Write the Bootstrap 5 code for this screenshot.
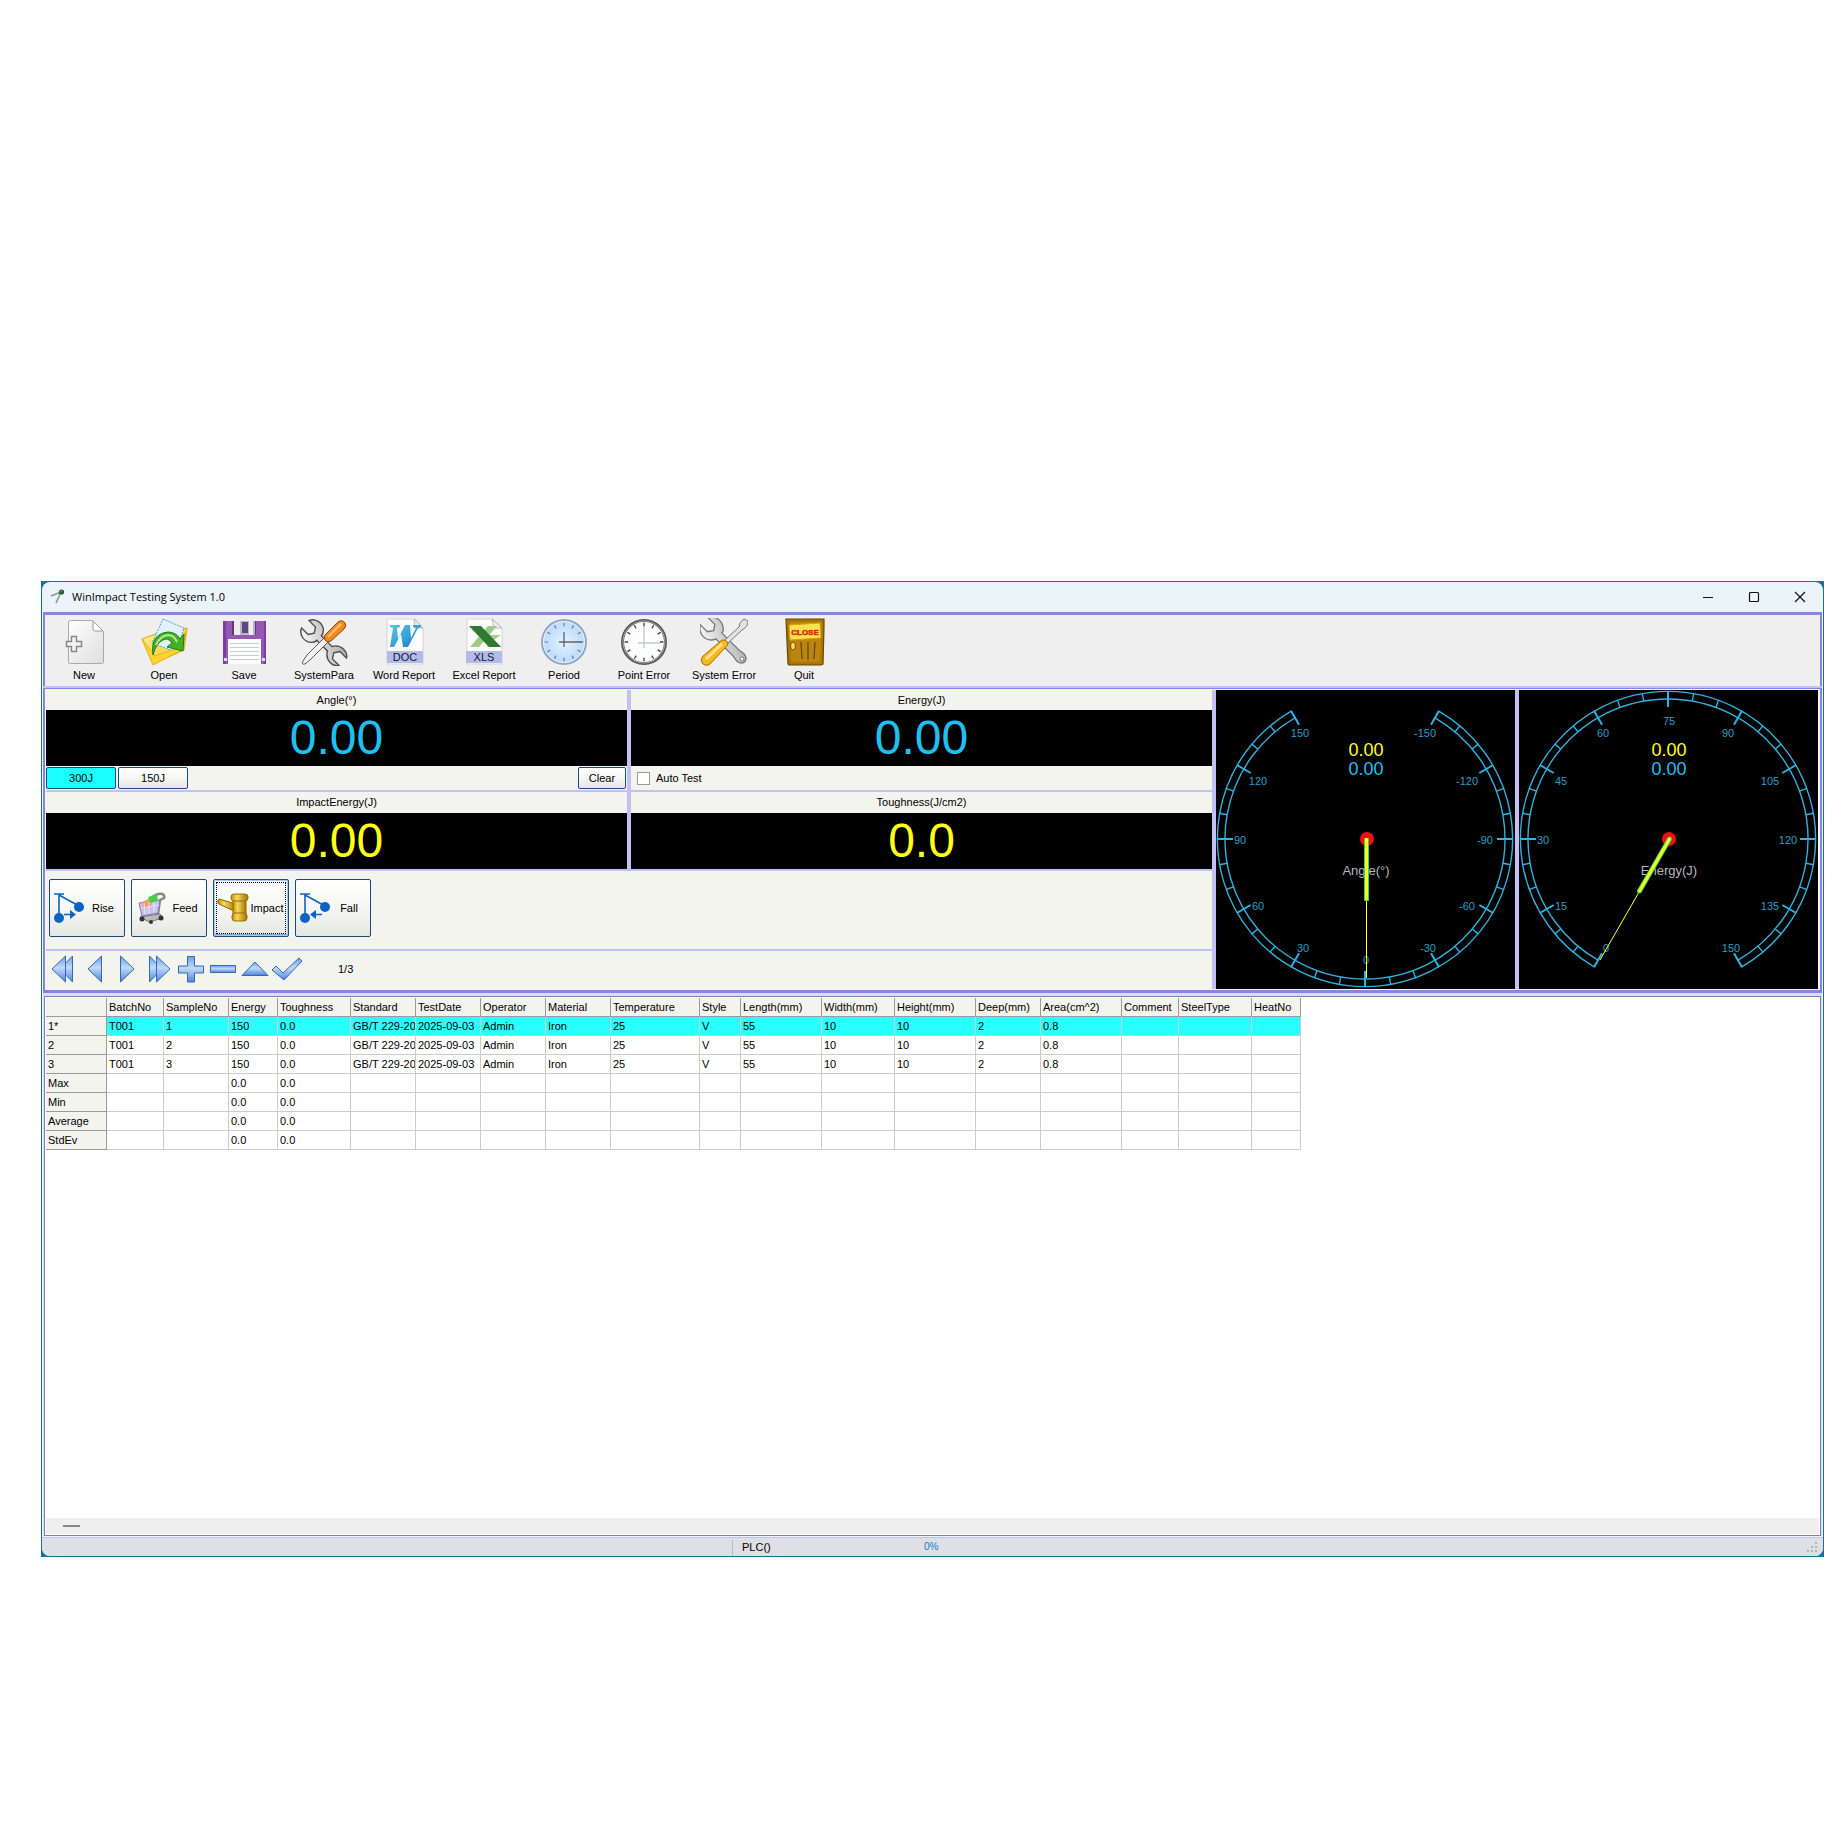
<!DOCTYPE html>
<html lang="en">
<head>
<meta charset="utf-8">
<meta name="viewport" content="width=device-width, initial-scale=1">
<title>WinImpact Testing System 1.0</title>
<link href="https://cdn.jsdelivr.net/npm/bootstrap@5.3.0/dist/css/bootstrap.min.css" rel="stylesheet">
<style>
:root{--panel:#f4f4ef;--lav:#c3c1f4;--purple:#8583ee;--cyan:#1fc0f0}
body{font:11px/16px "Liberation Sans",Arial,sans-serif;color:#000;background:#fff;padding:581px 17px 0 41px}
button{font:inherit;color:inherit;padding:0;border:0;background:none;line-height:16px}
svg{display:block;flex:none}
.win-frame{background:#1c6f9a;padding:1px}
.win{background:#ebf4f8;border-radius:8px;overflow:hidden}
.titlebar{height:30px;padding-left:7px;border-radius:8px 8px 0 0}
.titlebar h1{font:11px/16px "Open Sans","Noto Sans",sans-serif;margin:0 0 0 5px}
.win-ctl{width:46px;height:28px}
.main{padding:0 1px}
.tools{height:76px;background:#efefef;border-top:3px solid var(--purple);border-bottom:2px solid var(--lav);box-shadow:inset 2px 0 var(--purple),inset -2px 0 var(--purple);padding:1px 0 0 1px}
.tool{width:80px;height:68px;text-align:center}
.tool svg{margin:0 auto 1px}
.deck{border:2px solid var(--purple);border-top-width:1px;border-bottom-width:3px;background:var(--panel);padding:1px 2px 1px 1px}
.readouts{display:grid;grid-template-columns:1fr 1fr;column-gap:4px;background:var(--lav)}
.readout{background:var(--panel)}
.readout h2{font-size:11px;line-height:20px;margin:0;font-weight:400;text-align:center}
.readout output{display:block;background:#000;color:var(--cyan);font-size:48px;line-height:56px;text-align:center}
.readout.result{border-top:2px solid var(--lav)}
.readout.result h2{line-height:21px}
.readout.result output{color:#ffff1c}
.optbar{height:24px;padding:1px 1px 1px 0;gap:2px}
.xpbtn{border:1px solid #174a78;border-radius:2px;background:linear-gradient(#fff,#f6f6f4 50%,#e6e6e1)}
.optbar .xpbtn{width:70px;height:22px}
.optbar .xpbtn.clear{width:48px}
.xpbtn.active{background:#1cfdff}
.chk{width:13px;height:13px;margin:0 0 0 6px;border:1px solid #999;background:#fff;appearance:none}
.chk:checked{background:#1c6fc0}
.actions{height:80px;padding:8px 0 0 3px;gap:6px;border-top:2px solid var(--lav)}
.action{width:76px;height:58px;display:flex;align-items:center}
.action svg{margin-left:3px}
.action span{flex:1;text-align:center;padding-right:3px}
.action.focused{border-color:#1a4d80;box-shadow:inset 0 0 0 1px #a9c9ee,inset 0 -2px #7da7d8;outline:1px dotted #000;outline-offset:-4px}
.recnav{height:40px;border-top:2px solid var(--lav);padding:0 0 3px 1px}
.recnav button{width:32px;height:34px;display:flex;align-items:center;justify-content:center}
.recnav output{margin-left:35px;width:44px}
.dial{width:303px;border-left:4px solid var(--lav);background:#000}
.dial text{font-family:"Liberation Sans",Arial,sans-serif;text-anchor:middle;dominant-baseline:central}
.sheet{border:1px solid #7f7cc4;margin-top:2px;background:#fff;padding:1px}
.sheet-wrap{padding:1px 1px 0 1px;background:#dcdcfa}
.sheet-body{min-height:520px;overflow:hidden}
.datagrid{border-collapse:separate;border-spacing:0;table-layout:fixed;width:1255px;margin:0}
.datagrid th,.datagrid td{height:19px;padding:0 0 0 2px;font-weight:400;line-height:18px;border-right:1px solid #ccc;border-bottom:1px solid #ccc;white-space:nowrap;overflow:hidden}
.datagrid th{background:var(--panel);border-color:#9b9b9b}
.datagrid thead th{height:19px}
.datagrid tr.current td{background:#2bffff}
.hscroll{height:16px;background:#efefef;padding:7px 0 0 17px}
.hthumb{width:17px;height:2px;background:#888}
.status{height:19px;border-top:1px solid var(--lav);background:#dfe0e5;line-height:18px;margin-top:1px}
.status .cell1{flex:0 0 691px;border-right:1px solid #bbb;margin:2px 0 1px}
.status .cell2{width:191px;padding-left:9px}
.status .cell3{color:#0c7ec2;font-size:10px}
</style>
</head>
<body>
<svg width="0" height="0" class="position-absolute" aria-hidden="true">
<defs>
<linearGradient id="navg" x1="0" y1="0" x2="0" y2="1"><stop offset="0" stop-color="#6a9fe6"/><stop offset=".45" stop-color="#c0dafa"/><stop offset="1" stop-color="#4d86da"/></linearGradient>
<linearGradient id="pageg" x1="0" y1="0" x2="1" y2="1"><stop offset="0" stop-color="#fff"/><stop offset="1" stop-color="#dedede"/></linearGradient>
<linearGradient id="steel" x1="0" y1="0" x2="1" y2="1"><stop offset="0" stop-color="#fafafa"/><stop offset="1" stop-color="#a8a8a8"/></linearGradient>
<linearGradient id="gold" x1="0" y1="0" x2="1" y2="0"><stop offset="0" stop-color="#c58c06"/><stop offset=".35" stop-color="#f6d95a"/><stop offset="1" stop-color="#a87200"/></linearGradient>
<linearGradient id="yel" x1="0" y1="0" x2="1" y2="1"><stop offset="0" stop-color="#fff3a0"/><stop offset="1" stop-color="#f5bd12"/></linearGradient>
<linearGradient id="bluew" x1="0" y1="0" x2="1" y2="1"><stop offset="0" stop-color="#5cc3ee"/><stop offset="1" stop-color="#1280c4"/></linearGradient>
<radialGradient id="clockb"><stop offset="0" stop-color="#e6f2ff"/><stop offset="1" stop-color="#b9d9fa"/></radialGradient>
<g id="ticks"><path d="M0-22v4M11-19l-2 3.500M19-11l-3.500 2M22 0h-4M19 11l-3.500-2M11 19l-2-3.500M0 22v-4M-11 19l2-3.500M-19 11l3.500-2M-22 0h4M-19-11l3.500 2M-11-19l2 3.500"/></g>
<path id="major" d="M0 132V148" stroke="#2ab6e6" stroke-width="2"/>
<path id="minor" d="M0 140V148" stroke="#2ab6e6" stroke-width="1.400"/>
<g id="seg"><use href="#minor" transform="rotate(10)"/><use href="#minor" transform="rotate(20)"/><use href="#major" transform="rotate(30)"/></g>
<g id="scale" fill="none" stroke="#35afd8" stroke-width="1.400">
<path d="M-73.800-127.800A147.600 147.600 0 1 0 73.800-127.800"/><path d="M-70-121.200A140 140 0 1 0 70-121.200"/>
<use href="#major" transform="rotate(-150)"/>
<use href="#seg" transform="rotate(-150)"/><use href="#seg" transform="rotate(-120)"/><use href="#seg" transform="rotate(-90)"/><use href="#seg" transform="rotate(-60)"/><use href="#seg" transform="rotate(-30)"/><use href="#seg"/><use href="#seg" transform="rotate(30)"/><use href="#seg" transform="rotate(60)"/><use href="#seg" transform="rotate(90)"/><use href="#seg" transform="rotate(120)"/>
</g>
<path id="wrench" d="M-5-23a9 9 0 0 0-4 14q3 3 6 3v13q-6 3-6 9 0 5 4 7v-8l5-3 5 3v8q4-2 4-7 0-6-6-9V-6q3 0 6-3A9 9 0 0 0 5-23v8l-5 3-5-3z"/>
<path id="spanner" d="M-5-23a9 9 0 0 0-4 14q3 3 5 3v21q-2 5 1 8 3 2 6 0 3-3 1-8V-6q3 0 5-3A9 9 0 0 0 5-23v8l-5 3-5-3z"/>
</defs>
</svg>

<div class="win-frame">
<div class="win">
  <header class="titlebar d-flex align-items-center">
    <svg width="18" height="18" viewBox="0 0 18 18"><path d="M12 4L7 15M12 4L2 8" stroke="#8c979c" stroke-width="1.600" fill="none"/><circle cx="12.500" cy="4" r="2.600" fill="#225c33"/><circle cx="12" cy="3.500" r="1" fill="#4d9d5c"/></svg>
    <h1 class="flex-grow-1">WinImpact Testing System 1.0</h1>
    <button class="win-ctl" aria-label="Minimize"><svg class="m-auto" width="12" height="12" viewBox="0 0 12 12"><path d="M1 6.500h10" stroke="#111"/></svg></button>
    <button class="win-ctl" aria-label="Maximize"><svg class="m-auto" width="12" height="12" viewBox="0 0 12 12"><rect x="1.500" y="1.500" width="9" height="9" rx="1" fill="none" stroke="#111" stroke-width="1.200"/></svg></button>
    <button class="win-ctl" aria-label="Close"><svg class="m-auto" width="12" height="12" viewBox="0 0 12 12"><path d="M1 1l10 10M11 1L1 11" stroke="#111" stroke-width="1.200"/></svg></button>
  </header>

  <div class="main">
  <nav class="tools d-flex" aria-label="Main toolbar">
    <button class="tool"><svg width="48" height="48" viewBox="0 0 48 48"><path d="M8.500 4.500q0-2 2-2h22l11 11v31q0 1-2 1h-31q-2 0-2-1z" fill="url(#pageg)" stroke="#a9a9a9"/><path d="M33 3v8q0 2 2 2h8z" fill="#fff" stroke="#999"/><path d="M11.500 18.500h5v5h5v5h-5v5h-5v-5h-5v-5h5z" fill="#f3f3f3" stroke="#888" stroke-width="1.500"/></svg>New</button>
    <button class="tool"><svg width="48" height="48" viewBox="0 0 48 48"><path d="M2 21l16-6 29-5-3 22-31 14z" fill="url(#yel)" stroke="#e5a50a"/><path d="M23 1l21 9-8 24-24-9z" fill="#dff2fb" stroke="#4aa8d8" stroke-dasharray="2 1"/><path d="M2 21l11 26 29-15 5-21-9 19-23 8z" fill="#ffd42e" stroke="#e9b312"/><path d="M13 37q-3-21 15-23 8 0 12 7l4-5-1 17-16-4 5-4q-4-6-9-3-7 3-10 15z" fill="#43b02a" stroke="#1e7a14"/><path d="M16 27q4-9 12-10 6 0 9 7" fill="none" stroke="#b6ec8c" stroke-width="2"/></svg>Open</button>
    <button class="tool"><svg width="48" height="48" viewBox="0 0 48 48"><path d="M3 3h43v43H6l-3-3z" fill="#9559b4"/><path d="M3 3h3v43H3zM44 3h2v43h-2z" fill="#7c3e9d"/><path d="M12 3h24v14H12z" fill="#5d3a75"/><path d="M14 3h21v14H14z" fill="#b9b9c1"/><path d="M14 3h6v14h-6zM29 3h4v14h-4z" fill="#eee"/><path d="M22 4h6v11h-6z" fill="#67447d"/><path d="M8 21h33v25H8z" fill="#fff"/><path d="M10 25.500h29M10 29.500h29M10 33.500h29M10 37.500h29M10 41.500h29" stroke="#c5cbe2"/><path d="M4 40h3v3H4zM42 40h3v3h-3z" fill="#eed8f7"/></svg>Save</button>
    <button class="tool"><svg width="48" height="48" viewBox="0 0 48 48"><use href="#wrench" transform="translate(24 25) rotate(-45) scale(1.050 1.150)" fill="url(#steel)" stroke="#4e4e4e" stroke-width="1.300"/><path d="M3 43l4-6L24 20l4 4L11 41l-6 5q-4 1-2-3z" fill="#f2f2f2" stroke="#555"/><path d="M24 18L38 4q4-3 7 1 2 3-1 6L31 23q-4 2-6-1z" fill="#f58a1c" stroke="#8a4207"/><path d="M28 19L41 6" stroke="#ffc27a" stroke-width="2"/></svg>SystemPara</button>
    <button class="tool"><svg width="48" height="48" viewBox="0 0 48 48"><path d="M7 1h28l8 9v36H7z" fill="#fcfcfc" stroke="#d6d6d6"/><path d="M34 1l1 9h8z" fill="#eee" stroke="#bbb"/><path d="M10 7h10v2l-3 1 1 11 7-14h5l1 13 5-10-3-1V7h8v2l-3 1-10 19h-5l-2-13-7 13h-4L13 10l-3-1z" fill="url(#bluew)"/><rect x="7" y="33" width="36" height="12" fill="#b3bbe8"/><text x="25" y="43" font-size="11" text-anchor="middle" fill="#14173a" font-family="Liberation Sans">DOC</text></svg>Word Report</button>
    <button class="tool"><svg width="48" height="48" viewBox="0 0 48 48"><path d="M7 1h26l9 9v36H7z" fill="#fcfcfc" stroke="#d6d6d6"/><path d="M32 1l2 9h8z" fill="#eee" stroke="#bbb"/><path d="M28 8h9L19 29h-9z" fill="#9fca86"/><path d="M27 17l14 0-7 5 7 7H27z" fill="#a9cf95"/><path d="M9 8h12l20 21H29z" fill="#2d7a33"/><rect x="6" y="33" width="36" height="12" fill="#b3bbe8"/><text x="24" y="43" font-size="11" text-anchor="middle" fill="#14173a" font-family="Liberation Sans">XLS</text></svg>Excel Report</button>
    <button class="tool"><svg width="48" height="48" viewBox="0 0 48 48"><circle cx="24" cy="24" r="22" fill="url(#clockb)" stroke="#8fa8c4" stroke-width="2"/><circle cx="24" cy="24" r="20.500" fill="none" stroke="#e8f3ff"/><use href="#ticks" transform="translate(24 24) scale(.88)" stroke="#587da8" stroke-width="1.300"/><path d="M24 14v15M19 24h23" stroke="#5b6570" stroke-width="1.300"/></svg>Period</button>
    <button class="tool"><svg width="48" height="48" viewBox="0 0 48 48"><circle cx="24" cy="24" r="21.500" fill="#fdfdfd" stroke="#555" stroke-width="3"/><circle cx="24" cy="24" r="21" fill="none" stroke="#aaa"/><use href="#ticks" transform="translate(24 24) scale(.88)" stroke="#444" stroke-width="1.500"/><path d="M24 8v22M18 25h22" stroke="#c5cac5" stroke-width="1.300"/></svg>Point Error</button>
    <button class="tool"><svg width="48" height="48" viewBox="0 0 48 48"><use href="#spanner" transform="translate(24 23) rotate(-45) scale(1.050 1.220)" fill="url(#steel)" stroke="#777" stroke-width="1.200"/><circle cx="42" cy="41" r="2" fill="#fff" stroke="#777"/><path d="M25 22L39 9q0-5 5-8l4 2q0 6-6 9L28 25z" fill="#e3e3e3" stroke="#777"/><path d="M22 22q4-1 6 3 0 3-3 5L10 46q-4 3-8-1-2-4 1-7z" fill="#fbb81f" stroke="#a66a05"/><path d="M22 26L6 41" stroke="#ffe48b" stroke-width="3"/></svg>System Error</button>
    <button class="tool"><svg width="48" height="48" viewBox="0 0 48 48"><path d="M6 1h38v8l-1 37-2 1H9l-1-1z" fill="#a87508" stroke="#6b4804" stroke-width="1.200"/><path d="M10 4h32l-2 40H11z" fill="#bb8510"/><path d="M21 24l1 17M28 24v18M35 24l-1 17" stroke="#6b4804" stroke-width="1.300"/><ellipse cx="13" cy="28" rx="2.500" ry="4" fill="#ffd94f" stroke="#765000"/><path d="M9 7l31-2 1 15-31 2z" fill="#ffe04e" stroke="#d9a300"/><text x="25" y="17" font-size="8" font-weight="bold" text-anchor="middle" fill="#dd2810" stroke="#dd2810" stroke-width=".5" font-family="Liberation Sans">CLOSE</text></svg>Quit</button>
  </nav>

  <section class="deck d-flex">
    <div class="flex-grow-1">
      <div class="readouts">
        <div class="readout"><h2>Angle(°)</h2><output>0.00</output>
          <div class="optbar d-flex"><button class="xpbtn active">300J</button><button class="xpbtn">150J</button><button class="xpbtn clear ms-auto">Clear</button></div></div>
        <div class="readout"><h2>Energy(J)</h2><output>0.00</output>
          <div class="optbar d-flex align-items-center"><input class="chk" type="checkbox" id="autoTest"><label for="autoTest" class="ms-1">Auto Test</label></div></div>
        <div class="readout result"><h2>ImpactEnergy(J)</h2><output>0.00</output></div>
        <div class="readout result"><h2>Toughness(J/cm2)</h2><output>0.0</output></div>
      </div>
      <div class="actions d-flex">
        <button class="xpbtn action"><svg width="32" height="32" viewBox="0 0 32 32"><path d="M1 2h10M6 2v24M6 3l20 11M11 22.500h8" stroke="#0b63c4" stroke-width="1.600" fill="none"/><path d="M17 18l6 4.500-6 4.500z" fill="#0b63c4"/><circle cx="26" cy="15" r="5" fill="#0b63c4"/><circle cx="6" cy="26" r="5" fill="#0b63c4"/></svg><span>Rise</span></button>
        <button class="xpbtn action"><svg width="32" height="32" viewBox="0 0 32 32"><path d="M18 5q4-4 9-3 3 1 2 4l-4 2-2 14" stroke="#888" stroke-width="2.500" fill="none"/><path d="M4 11l21-3-2 13-16 3z" fill="#c9c0ec" stroke="#8078b0"/><path d="M7 10l6-3 4 2-1 5-8 3z" fill="#f39b63"/><path d="M13 5l9-3 1 7-8 2z" fill="#4bcf4b"/><path d="M9 11l1 11M14 10v12M19 10v11M6 16l18-3" stroke="#e9e4ff"/><path d="M5 25l20-3 3 4-14 4z" fill="#bbb" stroke="#777"/><circle cx="7" cy="27" r="2.500" fill="#333"/><circle cx="26" cy="26" r="2.500" fill="#333"/><circle cx="16" cy="30" r="2" fill="#333"/></svg><span>Feed</span></button>
        <button class="xpbtn action focused"><svg width="32" height="32" viewBox="0 0 32 32"><path d="M2 7q-3 3 0 5l17 8v-8z" fill="url(#gold)" stroke="#8f6200"/><rect x="16" y="6" width="13" height="20" fill="url(#gold)" stroke="#9a6b00"/><rect x="14" y="2" width="17" height="7" rx="3" fill="url(#gold)" stroke="#9a6b00"/><rect x="15" y="21" width="15" height="8" rx="3" fill="url(#gold)" stroke="#9a6b00"/></svg><span>Impact</span></button>
        <button class="xpbtn action"><svg width="32" height="32" viewBox="0 0 32 32"><path d="M1 2h10M6 2v24M6 3l20 11M15 22.500h8" stroke="#0b63c4" stroke-width="1.600" fill="none"/><path d="M17 18l-6 4.500 6 4.500z" fill="#0b63c4"/><circle cx="26" cy="15" r="5" fill="#0b63c4"/><circle cx="6" cy="26" r="5" fill="#0b63c4"/></svg><span>Fall</span></button>
      </div>
      <div class="recnav d-flex align-items-center">
        <button aria-label="First"><svg width="28" height="28" viewBox="0 0 28 28" fill="url(#navg)" stroke="#3867b0"><path d="M23.500 1v26L11 14z"/><path d="M16.500 1v26L3 14z"/></svg></button>
        <button aria-label="Previous"><svg width="28" height="28" viewBox="0 0 28 28" fill="url(#navg)" stroke="#3867b0"><path d="M20.500 1v26L7 14z"/></svg></button>
        <button aria-label="Next"><svg width="28" height="28" viewBox="0 0 28 28" fill="url(#navg)" stroke="#3867b0"><path d="M7.500 1v26L21 14z"/></svg></button>
        <button aria-label="Last"><svg width="28" height="28" viewBox="0 0 28 28" fill="url(#navg)" stroke="#3867b0"><path d="M4.500 1v26L17 14z"/><path d="M11.500 1v26L25 14z"/></svg></button>
        <button aria-label="Add"><svg width="28" height="28" viewBox="0 0 28 28" fill="url(#navg)" stroke="#3867b0"><path d="M10.500 1.500h7v9.500h9v7h-9v9h-7v-9h-9v-7h9z"/></svg></button>
        <button aria-label="Delete"><svg width="28" height="28" viewBox="0 0 28 28" fill="url(#navg)" stroke="#3867b0"><path d="M1.500 10.500h25v7h-25z"/></svg></button>
        <button aria-label="Edit"><svg width="28" height="28" viewBox="0 0 28 28" fill="url(#navg)" stroke="#3867b0"><path d="M1 20.500h26L14 7z"/></svg></button>
        <button aria-label="Post"><svg width="32" height="28" viewBox="0 0 32 28" fill="url(#navg)" stroke="#3867b0"><path d="M1 15l4-4 7 7L28 3l3 3-18 19z"/></svg></button>
        <output>1/3</output>
      </div>
    </div>

    <div class="dial">
      <svg width="299" height="299" viewBox="0 0 299 299" role="img" aria-label="Angle gauge">
        <rect width="299" height="299" fill="#000"/>
        <use href="#scale" transform="translate(149 149)"/>
        <g fill="#2b9fc4" font-size="11"><text x="84" y="43">150</text><text x="209" y="43">-150</text><text x="42" y="91">120</text><text x="251" y="91">-120</text><text x="24" y="150">90</text><text x="269" y="150">-90</text><text x="42" y="216">60</text><text x="251" y="216">-60</text><text x="87" y="258">30</text><text x="212" y="258">-30</text><text x="150" y="270">0</text></g>
        <text x="150" y="60" font-size="18" fill="#ffff1c">0.00</text><text x="150" y="79" font-size="18" fill="#1fc0f0">0.00</text>
        <text x="150" y="180" font-size="13" fill="#b8b8b8">Angle(°)</text>
        <circle cx="151" cy="149" r="7" fill="#f01010"/>
        <path d="M150.500 149v139" stroke="#ffff3c"/><path d="M150.500 148v63" stroke="#3cc86c" stroke-width="5"/><path d="M150.500 148v62" stroke="#f2ff1c" stroke-width="3"/>
      </svg>
    </div>
    <div class="dial">
      <svg width="299" height="299" viewBox="0 0 299 299" role="img" aria-label="Energy gauge">
        <rect width="299" height="299" fill="#000"/>
        <use href="#scale" transform="translate(149 149) rotate(180)"/>
        <g fill="#2b9fc4" font-size="11"><text x="87" y="258">0</text><text x="42" y="216">15</text><text x="24" y="150">30</text><text x="42" y="91">45</text><text x="84" y="43">60</text><text x="150" y="31">75</text><text x="209" y="43">90</text><text x="251" y="91">105</text><text x="269" y="150">120</text><text x="251" y="216">135</text><text x="212" y="258">150</text></g>
        <text x="150" y="60" font-size="18" fill="#ffff1c">0.00</text><text x="150" y="79" font-size="18" fill="#1fc0f0">0.00</text>
        <text x="150" y="180" font-size="13" fill="#b8b8b8">Energy(J)</text>
        <circle cx="150" cy="149" r="7" fill="#f01010"/>
        <path d="M150.500 149L81 270" stroke="#ffff3c"/><path d="M150.500 149L120.500 201" stroke="#3cc86c" stroke-width="5" stroke-linecap="round"/><path d="M150.500 149L120.500 201" stroke="#f2ff1c" stroke-width="3" stroke-linecap="round"/>
      </svg>
    </div>
  </section>

  <div class="sheet-wrap">
  <section class="sheet">
    <div class="sheet-body">
    <table class="datagrid">
      <colgroup><col style="width:61px"><col style="width:57px"><col style="width:65px"><col style="width:49px"><col style="width:73px"><col style="width:65px"><col style="width:65px"><col style="width:65px"><col style="width:65px"><col style="width:89px"><col style="width:41px"><col style="width:81px"><col style="width:73px"><col style="width:81px"><col style="width:65px"><col style="width:81px"><col style="width:57px"><col style="width:73px"><col style="width:49px"></colgroup>
      <thead><tr><th></th><th>BatchNo</th><th>SampleNo</th><th>Energy</th><th>Toughness</th><th>Standard</th><th>TestDate</th><th>Operator</th><th>Material</th><th>Temperature</th><th>Style</th><th>Length(mm)</th><th>Width(mm)</th><th>Height(mm)</th><th>Deep(mm)</th><th>Area(cm^2)</th><th>Comment</th><th>SteelType</th><th>HeatNo</th></tr></thead>
      <tbody>
      <tr class="current"><th>1*</th><td>T001</td><td>1</td><td>150</td><td>0.0</td><td>GB/T 229-20</td><td>2025-09-03</td><td>Admin</td><td>Iron</td><td>25</td><td>V</td><td>55</td><td>10</td><td>10</td><td>2</td><td>0.8</td><td></td><td></td><td></td></tr>
      <tr><th>2</th><td>T001</td><td>2</td><td>150</td><td>0.0</td><td>GB/T 229-20</td><td>2025-09-03</td><td>Admin</td><td>Iron</td><td>25</td><td>V</td><td>55</td><td>10</td><td>10</td><td>2</td><td>0.8</td><td></td><td></td><td></td></tr>
      <tr><th>3</th><td>T001</td><td>3</td><td>150</td><td>0.0</td><td>GB/T 229-20</td><td>2025-09-03</td><td>Admin</td><td>Iron</td><td>25</td><td>V</td><td>55</td><td>10</td><td>10</td><td>2</td><td>0.8</td><td></td><td></td><td></td></tr>
      <tr><th>Max</th><td></td><td></td><td>0.0</td><td>0.0</td><td></td><td></td><td></td><td></td><td></td><td></td><td></td><td></td><td></td><td></td><td></td><td></td><td></td><td></td></tr>
      <tr><th>Min</th><td></td><td></td><td>0.0</td><td>0.0</td><td></td><td></td><td></td><td></td><td></td><td></td><td></td><td></td><td></td><td></td><td></td><td></td><td></td><td></td></tr>
      <tr><th>Average</th><td></td><td></td><td>0.0</td><td>0.0</td><td></td><td></td><td></td><td></td><td></td><td></td><td></td><td></td><td></td><td></td><td></td><td></td><td></td><td></td></tr>
      <tr><th>StdEv</th><td></td><td></td><td>0.0</td><td>0.0</td><td></td><td></td><td></td><td></td><td></td><td></td><td></td><td></td><td></td><td></td><td></td><td></td><td></td><td></td></tr>
      </tbody>
    </table>
    </div>
    <div class="hscroll"><div class="hthumb"></div></div>
  </section>
  </div>
  </div>

  <footer class="status d-flex">
    <div class="cell1"></div><div class="cell2">PLC()</div><div class="cell3">0%</div>
    <svg class="ms-auto mt-1 me-1" width="12" height="12" viewBox="0 0 12 12"><path d="M8 0h2v2H8zM4 4h2v2H4zM8 4h2v2H8zM0 8h2v2H0zM4 8h2v2H4zM8 8h2v2H8z" fill="#b4b4b8"/></svg>
  </footer>
</div>
</div>
<script src="https://cdn.jsdelivr.net/npm/bootstrap@5.3.0/dist/js/bootstrap.bundle.min.js"></script>
</body>
</html>
